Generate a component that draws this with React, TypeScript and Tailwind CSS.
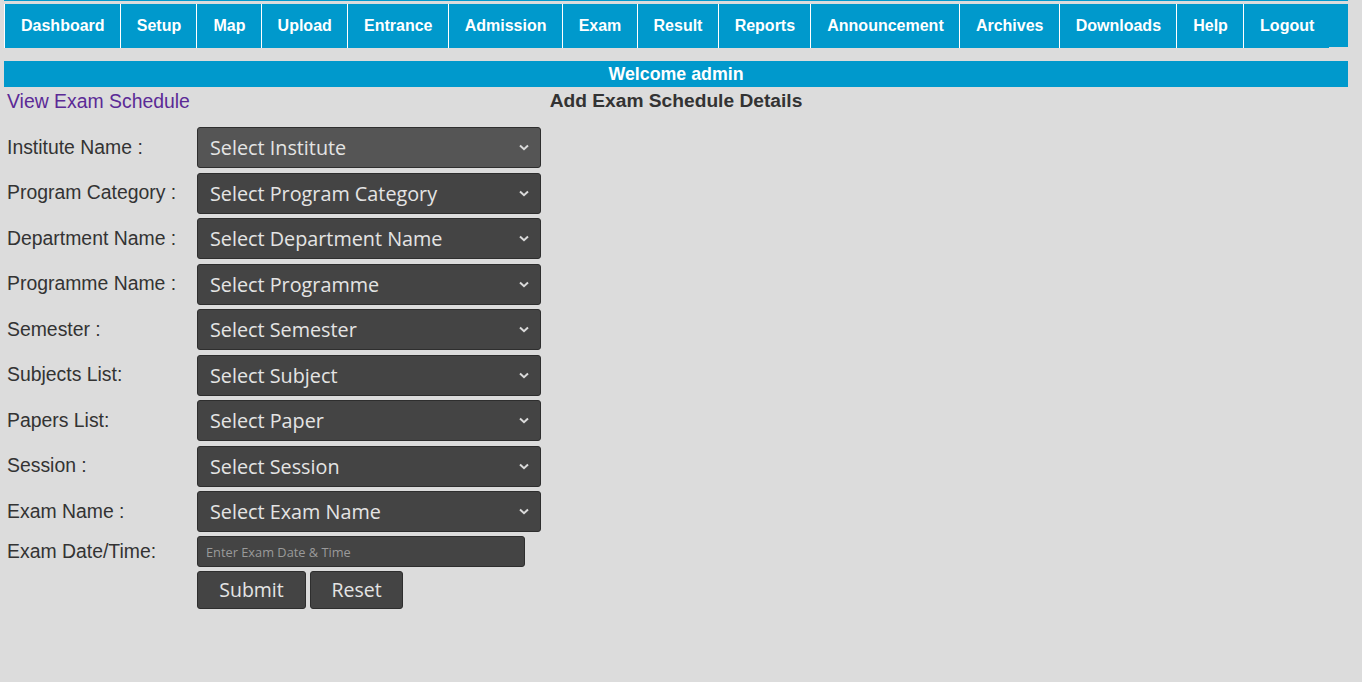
import React from "react";

const navItems = [
  "Dashboard",
  "Setup",
  "Map",
  "Upload",
  "Entrance",
  "Admission",
  "Exam",
  "Result",
  "Reports",
  "Announcement",
  "Archives",
  "Downloads",
  "Help",
  "Logout",
];

const rows = [
  ["Institute Name :", "Select Institute"],
  ["Program Category :", "Select Program Category"],
  ["Department Name :", "Select Department Name"],
  ["Programme Name :", "Select Programme"],
  ["Semester :", "Select Semester"],
  ["Subjects List:", "Select Subject"],
  ["Papers List:", "Select Paper"],
  ["Session :", "Select Session"],
  ["Exam Name :", "Select Exam Name"],
];

function Chevron() {
  return (
    <svg width="10" height="7" viewBox="0 0 10 7" className="shrink-0">
      <path d="M1 1.5 L5 5.2 L9 1.5" fill="none" stroke="#dadada" strokeWidth="2" />
    </svg>
  );
}

export default function App() {
  return (
    <div className="min-h-screen w-full bg-[#dcdcdc] font-['Liberation_Sans',Arial,sans-serif]">
      <div className="ml-[4px] w-[1344px]">
        <div className="h-px bg-[#0099cc]" />
        <div className="mt-[3px] flex h-[43px] bg-[#0099cc]">
          {navItems.map((n) => (
            <div
              key={n}
              className="flex h-[44px] items-center border-l border-white bg-[#0099cc] pl-4 pr-[15.2px] text-[16px] font-bold text-white"
            >
              {n}
            </div>
          ))}
        </div>
        <div className="mt-[14px] flex h-[26px] items-center justify-center bg-[#0099cc] text-[17.8px] font-bold text-white">
          Welcome admin
        </div>
        <div className="grid h-[28px] grid-cols-[1fr_auto_1fr] items-center">
          <div className="pl-[3px] text-[19.4px] text-[#5b2a96]">View Exam Schedule</div>
          <div className="text-[19.2px] font-bold text-[#333333]">Add Exam Schedule Details</div>
          <div />
        </div>
        <div className="mt-[12px] flex flex-col gap-[4.5px]">
          {rows.map(([label, value], i) => (
            <div key={label} className="flex items-center">
              <div className="w-[193px] pl-[3px] text-[19.4px] text-[#333333]">{label}</div>
              <div
                className={`flex h-[41px] w-[344px] items-center justify-between rounded-[3px] border border-[#2e2e2e] pl-[12px] pr-[11px] font-['Open_Sans',sans-serif] text-[19.8px] text-[#e4e4e4] ${
                  i === 0 ? "bg-[#555555]" : "bg-[#444444]"
                }`}
              >
                <span className="pt-px">{value}</span>
                <Chevron />
              </div>
            </div>
          ))}
          <div className="-mt-[0.5px] flex items-center">
            <div className="w-[193px] pl-[3px] text-[19.4px] text-[#333333]">Exam Date/Time:</div>
            <input
              className="h-[31px] w-[328px] rounded-[3px] border border-[#2e2e2e] bg-[#444444] px-[8px] font-['Open_Sans',sans-serif] text-[12.8px] text-[#e4e4e4] outline-none placeholder:text-[#9a9a9a]"
              placeholder="Enter Exam Date & Time"
            />
          </div>
          <div className="-mt-[0.5px] flex items-center gap-[4px] pl-[193px]">
            <button className="h-[38px] w-[109px] rounded-[3px] border border-[#2e2e2e] bg-[#444444] font-['Open_Sans',sans-serif] text-[19.5px] text-[#e4e4e4]">
              Submit
            </button>
            <button className="h-[38px] w-[93px] rounded-[3px] border border-[#2e2e2e] bg-[#444444] font-['Open_Sans',sans-serif] text-[19.5px] text-[#e4e4e4]">
              Reset
            </button>
          </div>
        </div>
      </div>
    </div>
  );
}
